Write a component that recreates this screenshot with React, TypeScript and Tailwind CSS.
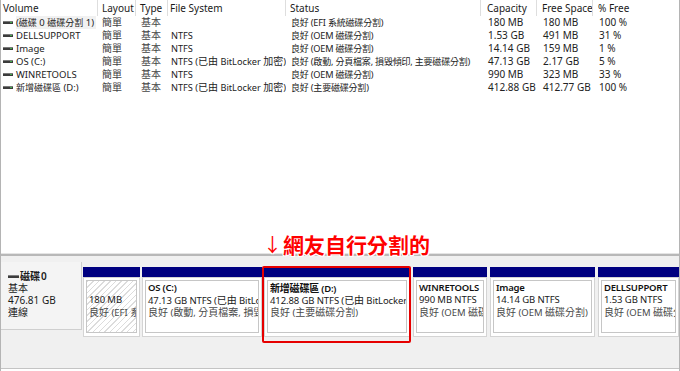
import React from 'react';

const CJK = /([\u2E80-\u9FFF\uFF00-\uFFEF]+)/;

// latin text in the original is narrower than the CJK glyphs, so they get separate sizes
const T: React.FC<{ s: string; small?: boolean }> = ({ s, small }) => (
  <>
    {s.split(CJK).map((p, i) =>
      i % 2 ? (
        <span key={i} className={small ? 'text-[9px]' : 'text-[10px]'}>
          {p}
        </span>
      ) : (
        <React.Fragment key={i}>{p}</React.Fragment>
      )
    )}
  </>
);

const DriveIcon: React.FC = () => (
  <svg width="10" height="5" viewBox="0 0 10 5" className="shrink-0">
    <rect x="0" y="1" width="10" height="3" fill="#3c3c3c" />
    <rect x="0" y="1" width="10" height="1" fill="#7a7a7a" />
    <rect x="7" y="2" width="2" height="1" fill="#3fae49" />
  </svg>
);

type Row = {
  volume: string;
  fs: string;
  status: string;
  capacity: string;
  free: string;
  pct: string;
};

const ROWS: Row[] = [
  { volume: '(磁碟 0 磁碟分割 1)', fs: '', status: '良好 (EFI 系統磁碟分割)', capacity: '180 MB', free: '180 MB', pct: '100 %' },
  { volume: 'DELLSUPPORT', fs: 'NTFS', status: '良好 (OEM 磁碟分割)', capacity: '1.53 GB', free: '491 MB', pct: '31 %' },
  { volume: 'Image', fs: 'NTFS', status: '良好 (OEM 磁碟分割)', capacity: '14.14 GB', free: '159 MB', pct: '1 %' },
  { volume: 'OS (C:)', fs: 'NTFS (已由 BitLocker 加密)', status: '良好 (啟動, 分頁檔案, 損毀傾印, 主要磁碟分割)', capacity: '47.13 GB', free: '2.17 GB', pct: '5 %' },
  { volume: 'WINRETOOLS', fs: 'NTFS', status: '良好 (OEM 磁碟分割)', capacity: '990 MB', free: '323 MB', pct: '33 %' },
  { volume: '新增磁碟區 (D:)', fs: 'NTFS (已由 BitLocker 加密)', status: '良好 (主要磁碟分割)', capacity: '412.88 GB', free: '412.77 GB', pct: '100 %' },
];

type Part = {
  name: string;
  size: string;
  status: string;
  width: string;
  gap: string;
  hatched?: boolean;
  marked?: boolean;
};

const PARTS: Part[] = [
  { name: '', size: '180 MB', status: '良好 (EFI 系統磁碟分割)', width: 'w-[57px] shrink-0', gap: 'ml-0', hatched: true },
  { name: 'OS  (C:)', size: '47.13 GB NTFS (已由 BitLocker 加密)', status: '良好 (啟動, 分頁檔案, 損毀傾印, 主要磁碟分割)', width: 'w-[120px] shrink-0', gap: 'ml-[2px]' },
  { name: '新增磁碟區  (D:)', size: '412.88 GB NTFS (已由 BitLocker 加密)', status: '良好 (主要磁碟分割)', width: 'w-[146px] shrink-0', gap: 'ml-[2px]', marked: true },
  { name: 'WINRETOOLS', size: '990 MB NTFS', status: '良好 (OEM 磁碟分割)', width: 'w-[74px] shrink-0', gap: 'ml-[3px]' },
  { name: 'Image', size: '14.14 GB NTFS', status: '良好 (OEM 磁碟分割)', width: 'w-[105px] shrink-0', gap: 'ml-[3px]' },
  { name: 'DELLSUPPORT', size: '1.53 GB NTFS', status: '良好 (OEM 磁碟分割)', width: 'flex-1', gap: 'ml-[3px]' },
];

const Partition: React.FC<{ p: Part }> = ({ p }) => (
  <div className={`relative flex flex-col min-w-0 ${p.width} ${p.gap}`}>
    <div className="h-[10px] bg-[#000080]" />
    <div className="flex-1 bg-white border border-[#d4d4d4] p-[2px]">
      <div
        className={`h-[53px] border border-[#c6c6c6] pl-[2px] pt-[1px] overflow-hidden whitespace-nowrap leading-[12px] ${
          p.hatched
            ? 'bg-[repeating-linear-gradient(135deg,#dcdcdc_0px,#dcdcdc_1px,#ffffff_1px,#ffffff_4px)]'
            : 'bg-white'
        }`}
      >
        <div className="h-[12px] font-semibold tracking-[-0.2px] text-[#111]">
          <T s={p.name} />
        </div>
        <div className="h-[12px] tracking-[-0.1px] text-[#1a1a1a]">
          <T s={p.size} />
        </div>
        <div className="h-[12px] text-[#4a4a4a]">
          <T s={p.status} />
        </div>
      </div>
    </div>
    {p.marked && (
      <div className="absolute -left-[2px] -right-[1px] -top-[1px] -bottom-[6px] border-2 border-[#e60000] rounded-[2px]" />
    )}
  </div>
);

const Sep: React.FC = () => <div className="w-px h-[16px] bg-[#dedede] shrink-0" />;

export default function App() {
  return (
    <div className="relative w-[680px] h-[371px] overflow-hidden flex flex-col bg-white border-x border-[#b4b4b4] font-['Noto_Sans','Noto_Sans_CJK_TC',sans-serif] text-[9.5px] text-[#222]">
      {/* volume list */}
      <div className="h-[253px] bg-white flex flex-col text-[10px]">
        <div className="h-[16px] flex items-center leading-[16px] whitespace-nowrap text-[#1a1a1a]">
          <div className="w-[96px] pl-[2px]">Volume</div>
          <Sep />
          <div className="w-[37px] pl-[4px]">Layout</div>
          <Sep />
          <div className="w-[31px] pl-[4px]">Type</div>
          <Sep />
          <div className="w-[117px] pl-[2px]">File System</div>
          <Sep />
          <div className="w-[194px] pl-[4px]">Status</div>
          <Sep />
          <div className="w-[55px] pl-[6px]">Capacity</div>
          <Sep />
          <div className="w-[55px] pl-[5px]">Free Space</div>
          <Sep />
          <div className="flex-1 pl-[5px]">% Free</div>
        </div>
        {ROWS.map((r, i) => (
          <div key={r.volume} className="h-[13px] flex items-center leading-[13px] whitespace-nowrap">
            <div className="w-[97px] shrink-0 pl-[2px] flex items-center gap-[3px] overflow-hidden">
              <DriveIcon />
              <span className={`pr-[2px] text-[9.5px] ${i === 0 ? 'bg-[#f1f1f1]' : ''}`}>
                <T s={r.volume} small />
              </span>
            </div>
            <div className="w-[38px] shrink-0 pl-[4px] text-[#444]">
              <T s="簡單" />
            </div>
            <div className="w-[32px] shrink-0 pl-[5px] text-[#444]">
              <T s="基本" />
            </div>
            <div className="w-[118px] shrink-0 pl-[3px] overflow-hidden text-[9.2px]">
              <T s={r.fs} />
            </div>
            <div className="w-[195px] shrink-0 pl-[5px] overflow-hidden text-[9.2px] tracking-[-0.2px]">
              <T s={r.status} small />
            </div>
            <div className="w-[56px] shrink-0 pl-[7px]">{r.capacity}</div>
            <div className="w-[56px] shrink-0 pl-[6px]">{r.free}</div>
            <div className="flex-1 pl-[6px]">{r.pct}</div>
          </div>
        ))}
      </div>

      {/* splitter */}
      <div className="h-[1px] bg-[#e4e4e4]" />
      <div className="h-[2px] bg-[#b8b8b8]" />

      {/* graphical view */}
      <div className="flex-1 bg-[#f0f0f0] pt-[6px] border-b border-[#c4c4c4] mb-[2px]">
        <div className="flex h-[75px]">
          <div className="w-[81px] shrink-0 h-[68px] bg-[#f4f4f4] border-r border-b border-[#cfcfcf] pl-[7px] pt-[8px] leading-[12px] text-[10px] text-[#1a1a1a]">
            <div className="flex items-center gap-[1px] font-semibold">
              <svg width="11" height="5" viewBox="0 0 11 5">
                <rect x="0" y="1" width="11" height="3" fill="#3c3c3c" />
                <rect x="0" y="1" width="11" height="1" fill="#808080" />
              </svg>
              <T s="磁碟 0" />
            </div>
            <div>
              <T s="基本" />
            </div>
            <div>476.81 GB</div>
            <div>
              <T s="連線" />
            </div>
          </div>
          <div className="flex-1 min-w-0 flex pl-[1px] pt-[5px]">
            {PARTS.map((p) => (
              <Partition key={p.size} p={p} />
            ))}
          </div>
        </div>
      </div>

      {/* annotation */}
      <div className="absolute left-[262px] top-[231px] flex items-center text-[21px] leading-[26px] font-bold text-[#ff0000] font-['Noto_Sans_CJK_TC',sans-serif] [text-shadow:1px_0_#fff,-1px_0_#fff,0_1px_#fff,0_-1px_#fff,1px_1px_#fff,-1px_-1px_#fff,1px_-1px_#fff,-1px_1px_#fff]">
        <span className="font-normal text-[19px] mr-[1px]">↓</span>
        <span>網友自行分割的</span>
      </div>
    </div>
  );
}
